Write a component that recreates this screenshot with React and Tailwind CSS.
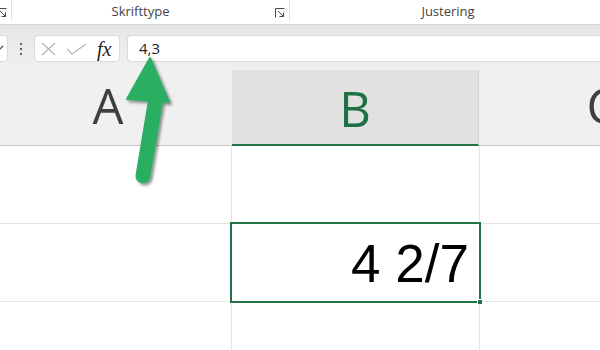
import React from "react";

const ui = { fontFamily: '"Open Sans", "Noto Sans", sans-serif' };
const arial = { fontFamily: '"Liberation Sans", Arial, sans-serif' };

function Launcher() {
  return (
    <svg width="10" height="10" viewBox="0 0 10 10" fill="none" stroke="#444" strokeWidth="1">
      <path d="M0.5 9.5V0.5H9.5" />
      <path d="M3 3L8.5 8.5M8.5 4.5V8.5H4.5" />
    </svg>
  );
}

function Ribbon() {
  return (
    <div className="flex h-[25px] bg-white border-b border-[#d4d4d4] text-[13px] text-[#444]" style={ui}>
      <div className="w-[12px] shrink-0 border-r border-[#e2e2e2] h-[21px] flex items-end pb-[3px]">
        <div className="-ml-[3px]"><Launcher /></div>
      </div>
      <div className="w-[278px] shrink-0 relative h-[21px] border-r border-[#e2e2e2]">
        <div className="flex justify-center pr-[20px] pt-[2px] leading-[18px]">Skrifttype</div>
        <div className="absolute right-[4px] bottom-[3px]"><Launcher /></div>
      </div>
      <div className="w-[316px] shrink-0 flex justify-center pt-[2px] leading-[18px]">Justering</div>
    </div>
  );
}

function FormulaBar() {
  return (
    <div className="h-[45px] flex items-start pt-[10px] bg-gradient-to-b from-[#e6e6e6] to-[#f0f0f0]" style={ui}>
      <div className="w-[18px] -ml-[10px] h-[27px] shrink-0 bg-white border border-[#d9d9d9] rounded-[4px] flex items-center justify-end pr-[1px]">
        <svg width="10" height="8" viewBox="0 0 10 8" fill="none" stroke="#444" strokeWidth="1.2">
          <path d="M-2 1L2 6L7 1" />
        </svg>
      </div>
      <div className="w-[26px] h-[27px] flex flex-col items-center justify-center gap-[3px]">
        <span className="w-[2px] h-[2px] bg-[#333] rounded-full" />
        <span className="w-[2px] h-[2px] bg-[#333] rounded-full" />
        <span className="w-[2px] h-[2px] bg-[#333] rounded-full" />
      </div>
      <div className="w-[86px] h-[27px] shrink-0 bg-white border border-[#d9d9d9] rounded-[4px] flex items-center pl-[6px]">
        <svg width="16" height="14" viewBox="0 0 16 14" fill="none" stroke="#b4b4b4" strokeWidth="1.2">
          <path d="M1 1L14 13M14 1L1 13" />
        </svg>
        <svg className="ml-[9px]" width="21" height="12" viewBox="0 0 21 12" fill="none" stroke="#b4b4b4" strokeWidth="1.2">
          <path d="M1 6L6 11L20 1" />
        </svg>
        <span className="ml-[10px] text-[20px] italic text-[#222] leading-none" style={{ fontFamily: '"Liberation Serif", "DejaVu Serif", serif' }}>
          fx
        </span>
      </div>
      <div className="ml-[7px] flex-1 h-[27px] bg-white border border-[#d9d9d9] rounded-l-[4px] border-r-0 flex items-center pl-[11px] text-[15px] text-[#1f1f1f]">
        4,3
      </div>
    </div>
  );
}

function Header() {
  return (
    <div className="flex h-[76px] bg-[#f0f0f0] border-b border-[#c6c6c6] text-[49px] leading-none" style={ui}>
      <div className="w-[232px] shrink-0 flex items-center justify-center pr-[16px] pb-[4px] text-[#3f3f3f]">A</div>
      <div className="w-[247px] shrink-0 flex items-center justify-center bg-[#e1e1e1] border-b-2 border-[#217346] -mb-px pt-[2px] text-[#1e7145] border-r border-r-[#d0d0d0]">
        B
      </div>
      <div className="w-[246px] shrink-0 flex items-center justify-center pb-[4px] text-[#3f3f3f]">C</div>
    </div>
  );
}

function Row({ children }) {
  return (
    <div className="flex h-[78px] border-b border-[#e3e3e3]">
      <div className="w-[232px] shrink-0 border-r border-[#e3e3e3]" />
      <div className="w-[248px] shrink-0 border-r border-[#e3e3e3] flex items-center justify-end pr-[10px]">{children}</div>
      <div className="w-[246px] shrink-0" />
    </div>
  );
}

export default function App() {
  return (
    <div className="relative w-[600px] h-[350px] overflow-hidden bg-white">
      <Ribbon />
      <FormulaBar />
      <Header />
      <Row />
      <Row>
        <span className="text-[53px] leading-none text-black pt-[2px]" style={arial}>4 2/7</span>
      </Row>
      <Row />

      <div className="absolute left-[230px] top-[222px] w-[251px] h-[81px] border-2 border-[#217346] pointer-events-none">
        <div className="absolute -right-[4px] -bottom-[4px] w-[6px] h-[6px] bg-[#217346] border border-white" />
      </div>

      <svg className="absolute left-0 top-0 pointer-events-none" width="600" height="350">
        <defs>
          <filter id="sh" x="-50%" y="-50%" width="200%" height="200%">
            <feDropShadow dx="2" dy="2" stdDeviation="1.8" floodColor="#000" floodOpacity="0.45" />
          </filter>
        </defs>
        <g filter="url(#sh)">
          <path d="M156 98L143 176" stroke="#2aae62" strokeWidth="15" strokeLinecap="round" />
          <path d="M150 58L127 99L169 102Z" fill="#2aae62" stroke="#2aae62" strokeWidth="2" strokeLinejoin="round" />
        </g>
      </svg>
    </div>
  );
}
